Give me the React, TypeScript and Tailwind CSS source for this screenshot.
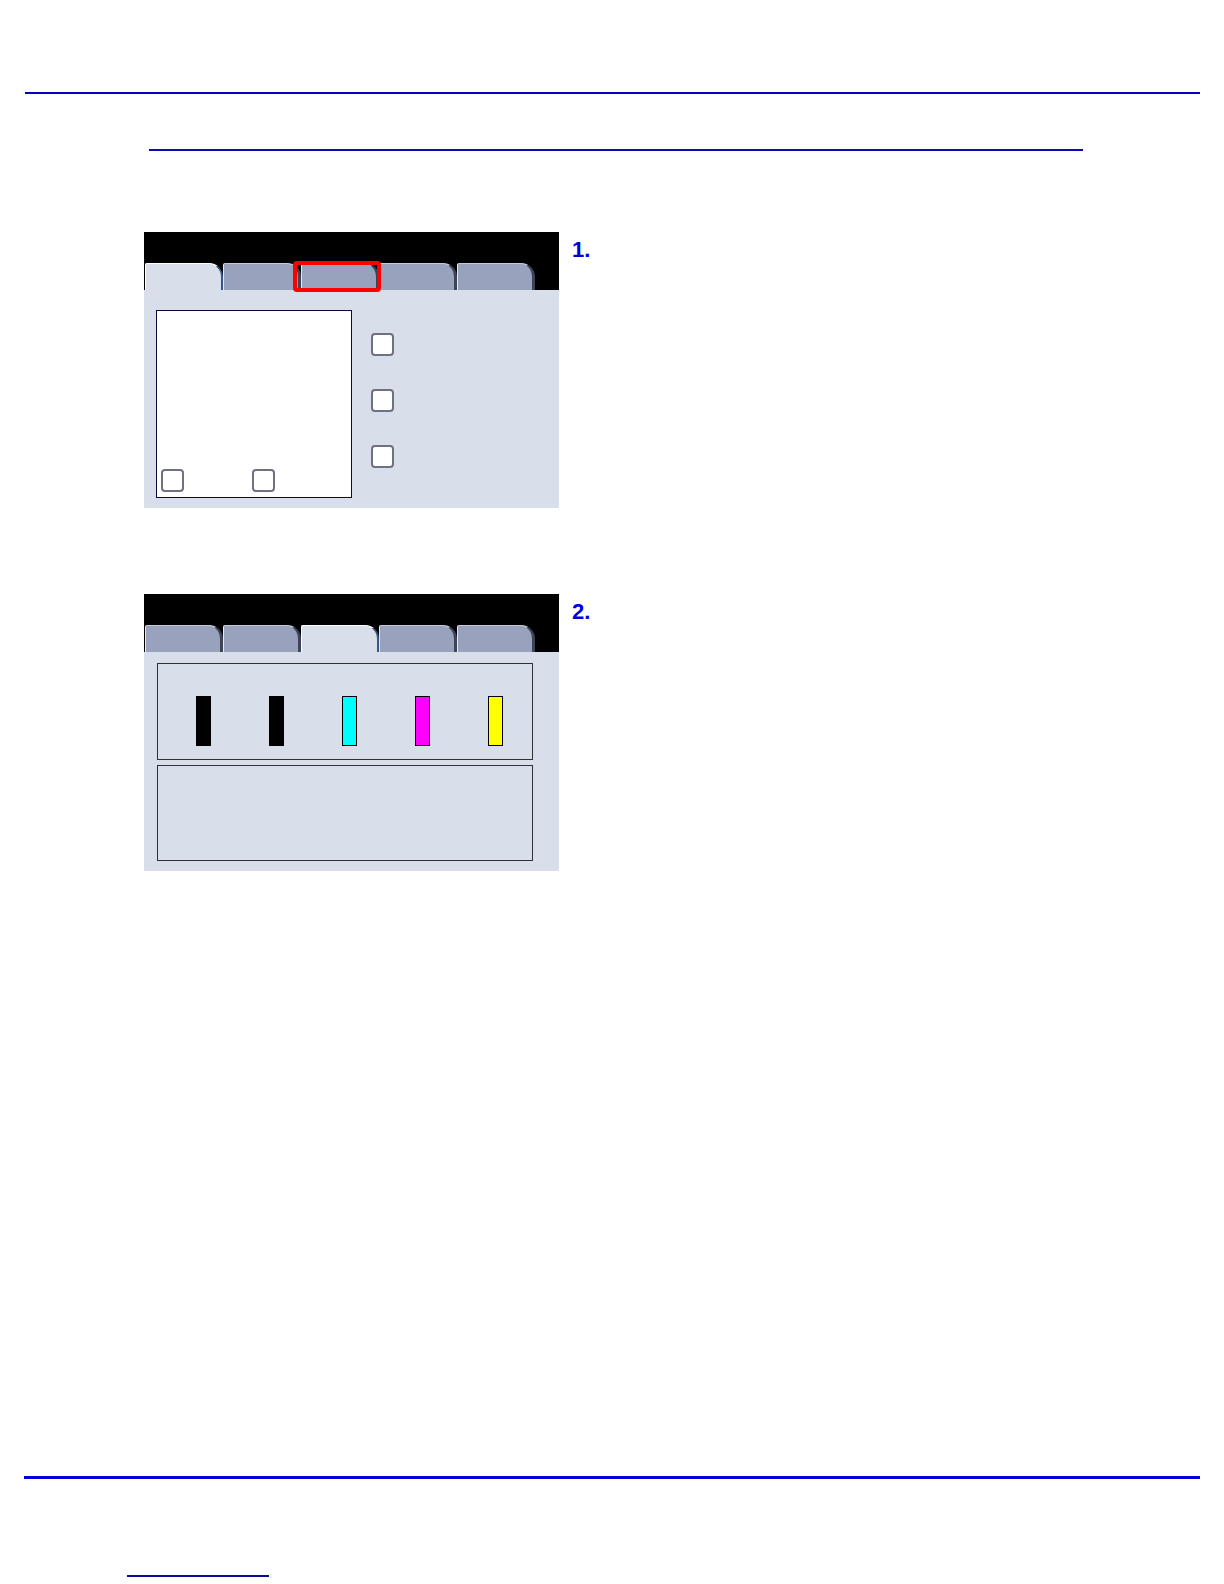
import React from "react";

const PANEL = "bg-[#d9dfea]";

function Tab({ active }: { active?: boolean }) {
  if (active) {
    return (
      <div className="w-[78px] h-[27px] shrink-0 rounded-tr-[14px] rounded-tl-[2px] border-t border-l border-r-2 border-t-white border-l-white border-r-[#35568a] bg-[#d9dfea]" />
    );
  }
  return (
    <div className="w-[78px] h-[27px] shrink-0 rounded-tr-[14px] rounded-tl-[2px] border-t border-l border-r-[3px] border-t-[#c4cad8] border-l-[#e4e8f0] border-r-[#3e4458] bg-[#98a2bc]" />
  );
}

function Checkbox() {
  return <div className="w-[23px] h-[23px] rounded-[4px] border-2 border-[#6d7183] bg-white" />;
}

function Screen({ activeTab, children, height }: { activeTab: number; children: React.ReactNode; height: string }) {
  return (
    <div className={`relative w-[415px] ${height} flex flex-col bg-black pt-[31px]`}>
      <div className="flex h-[27px] pl-[1px]">
        {[0, 1, 2, 3, 4].map((i) => (
          <Tab key={i} active={i === activeTab} />
        ))}
      </div>
      <div className={`flex-1 ${PANEL}`}>{children}</div>
    </div>
  );
}

function StepLabel({ n }: { n: string }) {
  return <span className="mt-[7px] text-[22px] font-bold leading-none text-[#0000dd]">{n}</span>;
}

export default function App() {
  const bars = ["bg-black", "bg-black", "bg-[#00ffff]", "bg-[#ff00ff]", "bg-[#ffff00]"];
  return (
    <div className="w-[1224px] h-[1584px] bg-white flex flex-col font-['Liberation_Sans',Arial,sans-serif]">
      <div className="mt-[92px] ml-[25px] w-[1175px] h-[2px] bg-[#0000c0]" />
      <div className="mt-[55px] ml-[149px] w-[934px] h-[2px] bg-[#0a0ab4]" />

      {/* step 1 */}
      <div className="mt-[81px] ml-[144px] flex items-start gap-[13px]">
        <Screen activeTab={0} height="h-[276px]">
          <div className="flex pl-[12px] pt-[20px]">
            <div className="w-[196px] h-[188px] border border-[#0a0a3a] bg-white flex items-end pb-[5px] pl-[4px] gap-[68px]">
              <Checkbox />
              <Checkbox />
            </div>
            <div className="ml-[19px] pt-[23px] flex flex-col gap-[33px]">
              <Checkbox />
              <Checkbox />
              <Checkbox />
            </div>
          </div>
          <div className="absolute left-[149px] top-[29px] w-[88px] h-[31px] rounded-[4px] border-4 border-[#ff0000]" />
        </Screen>
        <StepLabel n="1." />
      </div>

      {/* step 2 */}
      <div className="mt-[86px] ml-[144px] flex items-start gap-[13px]">
        <Screen activeTab={2} height="h-[277px]">
          <div className="flex flex-col pl-[13px] pt-[11px] gap-[5px]">
            <div className="w-[376px] h-[97px] border border-[#2e3036] flex items-start pl-[38px] pt-[32px] gap-[58px]">
              {bars.map((c, i) => (
                <div key={i} className={`w-[15px] h-[50px] border border-black ${c}`} />
              ))}
            </div>
            <div className="w-[376px] h-[96px] border border-[#2e3036]" />
          </div>
        </Screen>
        <StepLabel n="2." />
      </div>

      <div className="mt-[605px] ml-[24px] w-[1176px] h-[3px] bg-[#0000dd]" />
      <div className="mt-[96px] ml-[127px] w-[142px] h-[2px] bg-[#0a0a9c]" />
    </div>
  );
}
